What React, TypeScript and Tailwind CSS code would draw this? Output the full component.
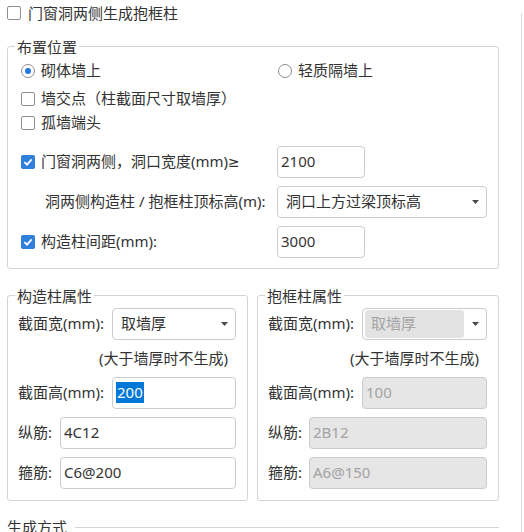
import React from 'react';

function Check({ checked }: { checked?: boolean }) {
  return checked ? (
    <span className="w-[14px] h-[14px] rounded-[2px] bg-[#2f80dc] flex items-center justify-center shrink-0">
      <svg width="10" height="10" viewBox="0 0 10 10">
        <path d="M1.4 5.1 L4 7.6 L8.7 2.3" stroke="white" strokeWidth="1.8" fill="none" />
      </svg>
    </span>
  ) : (
    <span className="w-[14px] h-[14px] rounded-[2px] border border-[#8e8e8e] bg-white shrink-0" />
  );
}

function Radio({ checked }: { checked?: boolean }) {
  return (
    <span className="w-[14px] h-[14px] rounded-full border border-[#8e8e8e] bg-white flex items-center justify-center shrink-0">
      {checked && <span className="w-[6px] h-[6px] rounded-full bg-[#1e78e0]" />}
    </span>
  );
}

function Arrow() {
  return (
    <svg width="7" height="4" viewBox="0 0 7 4" className="shrink-0">
      <polygon points="0,0 7,0 3.5,4" fill="#4a4a4a" />
    </svg>
  );
}

function Field({ value, width, disabled, selected }: { value: string; width: string; disabled?: boolean; selected?: boolean }) {
  return (
    <div
      className={`${width} h-[32px] rounded-[4px] border flex items-center px-[3px] ${
        disabled ? 'bg-[#e6e6e6] border-[#cbcbcb] text-[#a3a3a3]' : 'bg-white border-[#cdcdcd] text-[#333]'
      }`}
    >
      {selected ? <span className="bg-[#0078d7] text-white leading-[21px] px-[1px]">{value}</span> : value}
    </div>
  );
}

function Select({ value, width, disabled }: { value: string; width: string; disabled?: boolean }) {
  return (
    <div className={`${width} h-[32px] rounded-[4px] border border-[#cdcdcd] bg-white flex items-center pr-[7px]`}>
      {disabled ? (
        <div className="flex-1 h-[28px] ml-[2px] bg-[#e3e3e3] rounded-[3px] flex items-center pl-[6px] text-[#a3a3a3]">{value}</div>
      ) : (
        <div className="flex-1 pl-[8px] text-[#333]">{value}</div>
      )}
      <span className="ml-[8px]">
        <Arrow />
      </span>
    </div>
  );
}

function Group({ title, width, children }: { title: string; width: string; children: React.ReactNode }) {
  return (
    <fieldset className={`${width} border border-[#d3d3d3] rounded-[3px] p-0 m-0`}>
      <legend className="ml-[7px] px-[2px] leading-[18px] text-[#333]">{title}</legend>
      {children}
    </fieldset>
  );
}

function PropGroup({ title, width, disabled, sel, hi, zj, gj, wide, narrow }: {
  title: string; width: string; disabled?: boolean; sel: string; hi: string; zj: string; gj: string; wide: string; narrow: string;
}) {
  return (
    <Group title={title} width={width}>
      <div className="pl-[10px] pr-[11px] pt-[3px] pb-[11px] flex flex-col">
        <div className="h-[32px] flex items-center justify-between">
          <span>截面宽(mm):</span>
          <Select value={sel} width={narrow} disabled={disabled} />
        </div>
        <div className="h-[24px] mt-[7px] flex items-center justify-end pr-[8px]">(大于墙厚时不生成)</div>
        <div className="h-[32px] mt-[6px] flex items-center justify-between">
          <span>截面高(mm):</span>
          <Field value={hi} width={narrow} disabled={disabled} selected={!disabled} />
        </div>
        <div className="h-[32px] mt-[8px] flex items-center justify-between">
          <span>纵筋:</span>
          <Field value={zj} width={wide} disabled={disabled} />
        </div>
        <div className="h-[32px] mt-[8px] flex items-center justify-between">
          <span>箍筋:</span>
          <Field value={gj} width={wide} disabled={disabled} />
        </div>
      </div>
    </Group>
  );
}

export default function App() {
  return (
    <div className="w-[524px] h-[532px] overflow-hidden bg-white flex text-[15px] text-[#333] font-['Noto_Sans','Noto_Sans_CJK_SC',sans-serif]">
      <div className="w-[521px] flex flex-col shrink-0">
        {/* top option */}
        <div className="h-[24px] mt-[2px] pl-[7px] flex items-center">
          <Check />
          <span className="ml-[7px]">门窗洞两侧生成抱框柱</span>
        </div>

        {/* 布置位置 */}
        <div className="mt-[13px] pl-[7px]">
          <Group title="布置位置" width="w-[492px]">
            <div className="pl-[13px] pt-[3px] pb-[10px] flex flex-col">
              <div className="h-[24px] flex items-center">
                <div className="w-[256px] flex items-center">
                  <Radio checked />
                  <span className="ml-[6px]">砌体墙上</span>
                </div>
                <div className="flex items-center pl-[1px]">
                  <Radio />
                  <span className="ml-[6px]">轻质隔墙上</span>
                </div>
              </div>
              <div className="h-[24px] mt-[4px] flex items-center">
                <Check />
                <span className="ml-[6px]">墙交点（柱截面尺寸取墙厚）</span>
              </div>
              <div className="h-[24px] flex items-center">
                <Check />
                <span className="ml-[6px]">孤墙端头</span>
              </div>
              <div className="h-[32px] mt-[11px] flex items-center">
                <div className="w-[256px] flex items-center">
                  <Check checked />
                  <span className="ml-[6px]">
                    门窗洞两侧，洞口宽度(mm)<span className="font-['DejaVu_Sans',sans-serif] text-[14px]">≥</span>
                  </span>
                </div>
                <Field value="2100" width="w-[88px]" />
              </div>
              <div className="h-[32px] mt-[8px] flex items-center">
                <div className="w-[256px] pl-[24px] whitespace-nowrap">洞两侧构造柱 / 抱框柱顶标高(m):</div>
                <Select value="洞口上方过梁顶标高" width="w-[210px]" />
              </div>
              <div className="h-[32px] mt-[8px] flex items-center">
                <div className="w-[256px] flex items-center">
                  <Check checked />
                  <span className="ml-[6px]">构造柱间距(mm):</span>
                </div>
                <Field value="3000" width="w-[88px]" />
              </div>
            </div>
          </Group>
        </div>

        {/* 属性 */}
        <div className="mt-[18px] pl-[7px] flex gap-[9px]">
          <PropGroup title="构造柱属性" width="w-[241px]" sel="取墙厚" hi="200" zj="4C12" gj="C6@200" narrow="w-[124px]" wide="w-[176px]" />
          <PropGroup title="抱框柱属性" width="w-[242px]" disabled sel="取墙厚" hi="100" zj="2B12" gj="A6@150" narrow="w-[125px]" wide="w-[178px]" />
        </div>

        {/* 生成方式 */}
        <div className="h-[20px] mt-[17px] pl-[7px] pr-[22px] flex items-center shrink-0">
          <span>生成方式</span>
          <div className="flex-1 h-px bg-[#d6d6d6] ml-[8px]" />
        </div>
      </div>
      <div className="w-px mt-[13px] bg-[#dcdcdc]" />
    </div>
  );
}
